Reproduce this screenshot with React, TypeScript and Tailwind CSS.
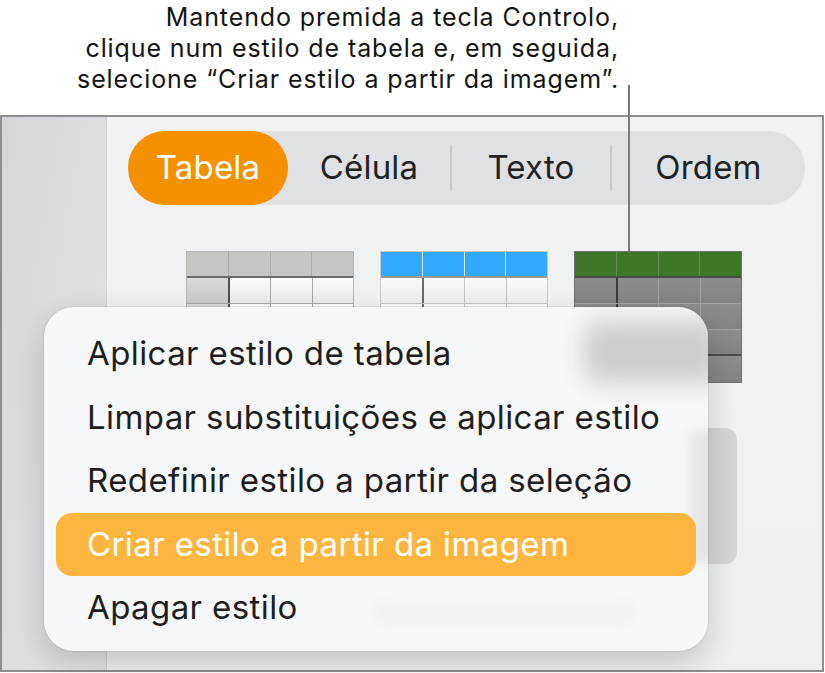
import React from 'react';

type Thumb = {
  outer: string;
  head: string;
  headLine: string;
  headRule: string;
  cell: string;
  firstCell: string;
  cellLine: string;
  firstLine: string;
  lastRule: string;
};

const thumbs: Thumb[] = [
  {
    outer: 'border-[#b4b5b4]',
    head: 'bg-[#c4c6c4]',
    headLine: 'border-[#a9aaa9]',
    headRule: 'border-[#6a6a6a]',
    cell: 'bg-gradient-to-b from-[#fbfbfb] to-[#e9e9e9]',
    firstCell: 'bg-gradient-to-b from-[#dadada] to-[#c8c8c8]',
    cellLine: 'border-[#a8a8a8]',
    firstLine: 'border-[#4f4f4f]',
    lastRule: 'border-[#a8a8a8]',
  },
  {
    outer: 'border-[#c9c9c9]',
    head: 'bg-[#33a8ff]',
    headLine: 'border-[#d9eeff]',
    headRule: 'border-[#9a9a9a]',
    cell: 'bg-gradient-to-b from-[#fafafa] to-[#ececec]',
    firstCell: 'bg-gradient-to-b from-[#fafafa] to-[#ececec]',
    cellLine: 'border-[#c4c4c4]',
    firstLine: 'border-[#6a6a6a]',
    lastRule: 'border-[#c4c4c4]',
  },
  {
    outer: 'border-[#6f6f6f]',
    head: 'bg-[#3e762a]',
    headLine: 'border-[#628c54]',
    headRule: 'border-[#4a4a4a]',
    cell: 'bg-gradient-to-b from-[#8d8d8d] to-[#838383]',
    firstCell: 'bg-gradient-to-b from-[#8d8d8d] to-[#838383]',
    cellLine: 'border-[#a2a2a2]',
    firstLine: 'border-[#3c3c3c]',
    lastRule: 'border-[#4c4c4c]',
  },
];

const TableThumb = ({ t }: { t: Thumb }) => (
  <div className={`w-[168px] border ${t.outer}`}>
    <div className={`flex h-[26px] border-b-2 ${t.headRule}`}>
      {[0, 1, 2, 3].map((c) => (
        <div key={c} className={`flex-1 ${t.head} ${c < 3 ? `border-r ${t.headLine}` : ''}`} />
      ))}
    </div>
    {[0, 1, 2, 3].map((r) => (
      <div
        key={r}
        className={`flex h-[26px] ${r < 3 ? 'border-b' : ''} ${r === 2 ? `border-b-2 ${t.lastRule}` : t.cellLine}`}
      >
        {[0, 1, 2, 3].map((c) => (
          <div
            key={c}
            className={`flex-1 ${c === 0 ? t.firstCell : t.cell} ${
              c === 0 ? `border-r-2 ${t.firstLine}` : c < 3 ? `border-r ${t.cellLine}` : ''
            }`}
          />
        ))}
      </div>
    ))}
  </div>
);

const menuItems = [
  'Aplicar estilo de tabela',
  'Limpar substituições e aplicar estilo',
  'Redefinir estilo a partir da seleção',
  'Criar estilo a partir da imagem',
  'Apagar estilo',
];

export default function App() {
  return (
    <div className="relative w-[825px] h-[673px] bg-white overflow-hidden font-['Inter',sans-serif]">
      {/* callout */}
      <div className="h-[115px] w-[619px] pt-[2px] text-right text-[25px] leading-[31px] tracking-[0.9px] text-[#141414]">
        <p>Mantendo premida a tecla Controlo,</p>
        <p>clique num estilo de tabela e, em seguida,</p>
        <p>selecione “Criar estilo a partir da imagem”.</p>
      </div>

      <div className="flex w-[824px] h-[557px] border-2 border-[#8e8e8e]">
        <div className="w-[105px] shrink-0 bg-gradient-to-br from-[#d6d7da] to-[#e2e3e6] border-r border-[#cfd0d3]" />
        <div className="flex-1 bg-gradient-to-b from-[#f1f2f4] to-[#eeeff1] pl-[21px] pt-[14px]">
          <div className="flex h-[74px] w-[677px] items-center rounded-full bg-[#e0e1e4] text-[33px] tracking-[0.2px] text-[#222]">
            <div className="flex h-full w-[160px] items-center justify-center rounded-full bg-[#f59100] text-white">
              Tabela
            </div>
            <div className="flex w-[162px] justify-center">Célula</div>
            <div className="h-[46px] w-[2px] bg-[#cbccd0]" />
            <div className="flex w-[158px] justify-center">Texto</div>
            <div className="h-[46px] w-[2px] bg-[#cbccd0]" />
            <div className="flex flex-1 justify-center">Ordem</div>
          </div>

          <div className="mt-[46px] ml-[58px] flex gap-[26px]">
            {thumbs.map((t, i) => (
              <TableThumb key={i} t={t} />
            ))}
          </div>

          <div className="mt-[45px] ml-[452px] h-[136px] w-[157px] rounded-[12px] bg-[#d5d6d9]" />
        </div>
      </div>

      {/* context menu */}
      <div className="absolute left-[44px] top-[307px] w-[664px] h-[344px] overflow-hidden rounded-[30px] bg-[#f6f7f8] px-[12px] pt-[15px] shadow-[0_0_0_1px_rgba(0,0,0,0.06),0_12px_30px_rgba(0,0,0,0.18)]">
        <div className="absolute left-[540px] top-[14px] h-[62px] w-[140px] rounded-[12px] bg-[#cdcdcd] blur-[12px]" />
        <div className="absolute left-[330px] top-[296px] h-[20px] w-[260px] rounded bg-[#eeeff0] blur-[8px]" />
        <div className="absolute left-[645px] top-[124px] h-[132px] w-[30px] bg-[#e4e5e7] blur-[6px]" />
        {menuItems.map((item, i) => (
          <div
            key={item}
            className={`relative flex h-[63.5px] items-center rounded-[16px] pl-[31px] text-[33px] tracking-[0.4px] ${
              i === 3 ? 'bg-[#fcb63f] text-white' : 'text-[#1e1e1e]'
            }`}
          >
            {item}
          </div>
        ))}
      </div>

      {/* leader line */}
      <div className="absolute left-[628px] top-[85px] h-[166px] w-[2px] bg-[#7a7a7a]" />
    </div>
  );
}
